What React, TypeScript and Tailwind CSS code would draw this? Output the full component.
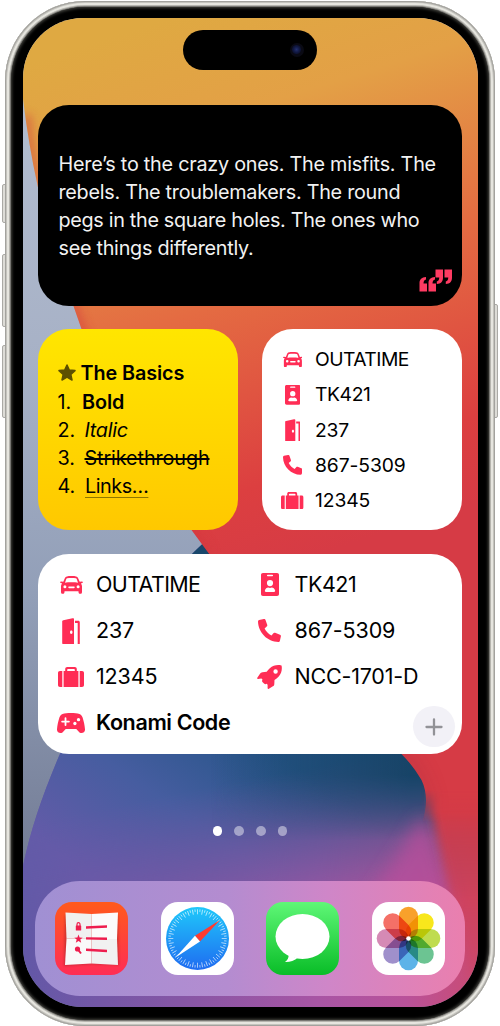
import type { ReactNode } from 'react';

type IconProps = { s?: number };

function Glyph({ w, h, s = 1, children }: { w: number; h: number; s?: number; children: ReactNode }) {
  return (
    <svg width={w * s} height={h * s} viewBox={`0 0 ${w} ${h}`} fill="#ff2d55" className="block shrink-0">
      {children}
    </svg>
  );
}

const Car = ({ s }: IconProps) => (
  <Glyph w={23} h={18} s={s}>
    <path
      fillRule="evenodd"
      d="M7 .4C8.500 0 14.500 0 16 .4 17.300.700 18 1.600 18.400 2.700L19.700 5.800 22 5.500C23 5.500 23.200 6.900 22.200 7.100L20.900 7.400C21.700 8.300 22 9.200 22 10.500V16C22 17.300 21.400 17.800 20.300 17.800 19.200 17.800 18.500 17.300 18.500 16V15.300H4.500V16C4.500 17.300 3.800 17.800 2.700 17.800 1.600 17.800 1 17.300 1 16V10.500C1 9.200 1.300 8.300 2.100 7.400L.8 7.100C-.2 6.900 0 5.500 1 5.500L3.300 5.800 4.600 2.700C5 1.600 5.700.700 7 .4ZM7.200 2.300C6.700 2.400 6.400 2.800 6.200 3.300L5 6.700C8 6.200 15 6.200 18 6.700L16.800 3.300C16.600 2.800 16.300 2.400 15.800 2.300 13.500 2 9.500 2 7.200 2.300ZM4.900 9.300A1.500 1.500 0 1 0 4.900 12.300 1.500 1.500 0 0 0 4.900 9.300ZM18.100 9.300A1.500 1.500 0 1 0 18.100 12.300 1.500 1.500 0 0 0 18.100 9.300ZM9 10.500C8 10.500 8 12.200 9 12.200H14C15 12.200 15 10.500 14 10.500Z"
    />
  </Glyph>
);

const Door = ({ s }: IconProps) => (
  <Glyph w={18} h={26} s={s}>
    <path
      fillRule="evenodd"
      d="M1.300 2.300 10.500.2C11.600 0 12 .4 12 1.200V26H1.200C.5 26 .2 25.700.2 25V3.500C.2 2.800.5 2.500 1.300 2.300ZM9.300 12.500C8.500 12.500 8 13.200 8 14.200S8.500 15.900 9.300 15.900 10.500 15.200 10.500 14.200 10.100 12.500 9.300 12.500Z"
    />
    <path d="M13 2.800H16.200C17.200 2.800 17.800 3.400 17.800 4.400V26H15.700V5.100H13Z" />
  </Glyph>
);

const Suitcase = ({ s }: IconProps) => (
  <Glyph w={26} h={20} s={s}>
    <path d="M2 4H4.300V20H2C.7 20 0 19.300 0 18V6C0 4.700.7 4 2 4ZM21.700 4H24C25.300 4 26 4.700 26 6V18C26 19.300 25.300 20 24 20H21.700Z" />
    <path
      fillRule="evenodd"
      d="M5.600 4H7.200V2C7.200.7 8 0 9.300 0H16.700C18 0 18.800.7 18.800 2V4H20.400V20H5.600ZM9.200 4H16.800V2.700C16.800 2.200 16.500 1.900 16 1.900H10C9.500 1.900 9.200 2.200 9.200 2.700Z"
    />
  </Glyph>
);

const Badge = ({ s }: IconProps) => (
  <Glyph w={18} h={23} s={s}>
    <path
      fillRule="evenodd"
      d="M2 0H16C17.300 0 18 .7 18 2V21C18 22.300 17.300 23 16 23H2C.7 23 0 22.300 0 21V2C0 .7.7 0 2 0ZM6.700 1.800C5.700 1.800 5.700 3.200 6.700 3.200H11.300C12.300 3.200 12.300 1.800 11.300 1.800ZM9 7A3.100 3.100 0 1 0 9 13.200 3.100 3.100 0 0 0 9 7ZM5 18.900H13C14 18.900 14.300 18.400 14.100 17.600 13.600 15.600 12.200 14.600 10.800 14.500 9.700 15.100 8.300 15.100 7.200 14.500 5.800 14.600 4.400 15.600 3.900 17.600 3.700 18.400 4 18.900 5 18.900Z"
    />
  </Glyph>
);

const Phone = ({ s }: IconProps) => (
  <Glyph w={23} h={23} s={s}>
    <path d="M1.100 1 5.900 0C6.700-.1 7.200.2 7.500.9L9.200 5.800C9.400 6.500 9.300 7 8.700 7.500L6.600 9.400C8.200 12.500 10.400 14.800 13.500 16.400L15.400 14.200C15.900 13.600 16.400 13.500 17.100 13.800L22 15.700C22.700 16 23 16.500 22.900 17.200L21.900 21.800C21.700 22.600 21.200 23 20.400 23 9.500 22.800.2 13.500 0 2.500 0 1.700.4 1.200 1.100 1Z" />
  </Glyph>
);

const Rocket = ({ s }: IconProps) => (
  <Glyph w={25} h={24} s={s}>
    <path
      fillRule="evenodd"
      d="M24.300.4C20.500-.3 16 .2 12.800 3.200 11.600 4.300 10.500 5.600 9.700 6.800L5.500 7.200C4.300 7.300 3.600 7.800 3 8.800L.3 12.800C-.1 13.500.3 14 1.100 13.900L4.400 13.600 5.500 14.600C4.900 15.600 4.900 16.400 5.700 17.200L7 18.500C7.900 19.300 8.700 19.300 9.700 18.700L10.600 19.700V23C10.600 23.900 11.200 24.200 11.900 23.800L15.900 21.300C16.800 20.700 17.300 20 17.300 18.900L17.500 14.900C19 14 20.300 12.900 21.500 11.700 24.500 8.600 25.300 4.400 24.600.8 24.600.6 24.500.4 24.300.4ZM18.600 4.300A2.200 2.200 0 1 0 18.600 8.700 2.200 2.200 0 0 0 18.600 4.300Z"
    />
  </Glyph>
);

const Gamepad = ({ s }: IconProps) => (
  <Glyph w={28} h={20} s={s}>
    <path d="M7.300.4C11-.2 17-.2 20.700.4 23.300.8 24.800 2 25.600 4.500 26.800 8.300 27.700 12.300 28 16.300 28.200 18.700 26.500 20 24.500 20 23.300 20 22.500 19.500 21.600 18.500L19.300 15.900H8.700L6.400 18.500C5.500 19.500 4.700 20 3.500 20 1.500 20-.2 18.700 0 16.300.3 12.300 1.200 8.300 2.400 4.500 3.200 2 4.700.8 7.300.4Z" />
    <path d="M8.500 5.200V12M5.100 8.600H11.900" stroke="white" strokeWidth="1.800" strokeLinecap="round" fill="none" />
    <circle cx="21.500" cy="6.700" r="1.650" fill="white" />
    <circle cx="17.900" cy="10.500" r="1.650" fill="white" />
  </Glyph>
);

function Wallpaper() {
  return (
    <svg className="absolute inset-0" width="455" height="989" viewBox="22.500 18 455 989">
      <defs>
        <linearGradient id="slate" x1="0" y1="95" x2="0" y2="860" gradientUnits="userSpaceOnUse">
          <stop offset="0" stopColor="#b2bdd0" />
          <stop offset=".35" stopColor="#a7b1c6" />
          <stop offset=".65" stopColor="#929fb8" />
          <stop offset="1" stopColor="#747d96" />
        </linearGradient>
        <linearGradient id="warm" x1="130" y1="30" x2="300" y2="560" gradientUnits="userSpaceOnUse">
          <stop offset="0" stopColor="#dfa942" />
          <stop offset=".2" stopColor="#e3a046" />
          <stop offset=".52" stopColor="#e46b42" />
          <stop offset=".85" stopColor="#dc3f40" />
          <stop offset="1" stopColor="#d63b45" />
        </linearGradient>
        <linearGradient id="deep" x1="110" y1="890" x2="230" y2="720" gradientUnits="userSpaceOnUse">
          <stop offset="0" stopColor="#635ba8" />
          <stop offset=".5" stopColor="#465da0" />
          <stop offset="1" stopColor="#265588" />
        </linearGradient>
        <linearGradient id="navy" x1="210" y1="0" x2="410" y2="0" gradientUnits="userSpaceOnUse">
          <stop offset="0" stopColor="#174467" stopOpacity="0" />
          <stop offset="1" stopColor="#174467" />
        </linearGradient>
        <linearGradient id="floor" x1="22" y1="0" x2="478" y2="0" gradientUnits="userSpaceOnUse">
          <stop offset="0" stopColor="#6358a7" />
          <stop offset=".35" stopColor="#8656a5" />
          <stop offset=".65" stopColor="#a855a4" />
          <stop offset=".84" stopColor="#b9529a" />
          <stop offset="1" stopColor="#cb4b72" />
        </linearGradient>
        <linearGradient id="fadeB" x1="220" y1="785" x2="250" y2="940" gradientUnits="userSpaceOnUse">
          <stop offset="0" stopColor="white" />
          <stop offset="1" stopColor="black" />
        </linearGradient>
        <linearGradient id="fadeN" x1="0" y1="775" x2="0" y2="840" gradientUnits="userSpaceOnUse">
          <stop offset="0" stopColor="white" />
          <stop offset="1" stopColor="black" />
        </linearGradient>
        <linearGradient id="fadeR" x1="0" y1="810" x2="0" y2="1000" gradientUnits="userSpaceOnUse">
          <stop offset="0" stopColor="white" />
          <stop offset="1" stopColor="black" />
        </linearGradient>
        <linearGradient id="fadeW" x1="0" y1="790" x2="0" y2="822" gradientUnits="userSpaceOnUse">
          <stop offset="0" stopColor="white" />
          <stop offset="1" stopColor="black" />
        </linearGradient>
        <mask id="mB" maskUnits="userSpaceOnUse" x="0" y="0" width="500" height="1026">
          <rect width="500" height="1026" fill="url(#fadeB)" />
        </mask>
        <mask id="mN" maskUnits="userSpaceOnUse" x="0" y="0" width="500" height="1026">
          <rect width="500" height="1026" fill="url(#fadeN)" />
        </mask>
        <mask id="mR" maskUnits="userSpaceOnUse" x="0" y="0" width="600" height="1026">
          <rect width="600" height="1026" fill="url(#fadeR)" />
        </mask>
        <mask id="mW" maskUnits="userSpaceOnUse" x="0" y="0" width="500" height="1026">
          <rect width="500" height="1026" fill="url(#fadeW)" />
        </mask>
        <filter id="soft" filterUnits="userSpaceOnUse" x="0" y="0" width="600" height="1100">
          <feGaussianBlur stdDeviation="9" />
        </filter>
        <filter id="edge" filterUnits="userSpaceOnUse" x="0" y="0" width="600" height="1100">
          <feGaussianBlur stdDeviation="5" />
        </filter>
        <clipPath id="warmClip">
          <path d="M22 0H480V824H421C427 808 427 792 421 780 415 770 409 762 401 754L208 553Q130 450 81 329L73 306Q45 230 37 185 28 145 22 95Z" />
        </clipPath>
        <clipPath id="hill">
          <path d="M22 868C30 830 42 795 59 755L130 620Q178 566 202 544L480 544V1010H22Z" />
        </clipPath>
      </defs>
      <rect x="22" y="18" width="456" height="990" fill="url(#slate)" />
      <g clipPath="url(#hill)">
        <rect x="22" y="500" width="456" height="510" fill="url(#floor)" />
        <rect x="22" y="500" width="456" height="510" fill="url(#deep)" mask="url(#mB)" />
        <path d="M210 500H440V850H210Z" fill="url(#navy)" mask="url(#mN)" />
        <path d="M180 530H240V570H180Z" fill="#19476b" />
        <path d="M422 815Q402 850 365 905H450Q440 850 422 815Z" fill="#b6509c" filter="url(#soft)" opacity=".8" />
        <g mask="url(#mR)">
          <path d="M424 740 432 780 431 812 442 860 474 1000H600V740Z" fill="#d43b47" filter="url(#edge)" />
        </g>
      </g>
      <g mask="url(#mW)">
        <g clipPath="url(#warmClip)">
          <rect x="22" y="18" width="456" height="810" fill="url(#warm)" />
          <path d="M26 115Q28 145 37 185 45 230 73 306L81 329Q130 450 208 553" fill="none" stroke="#d2353c" strokeWidth="9" opacity=".5" filter="url(#edge)" />
          <path d="M395 748Q425 775 427 812" fill="none" stroke="#9d2d43" strokeWidth="9" opacity=".35" filter="url(#soft)" />
        </g>
      </g>
    </svg>
  );
}

function QuoteMarks() {
  return (
    <svg width="34" height="23" viewBox="0 0 34 23" fill="#ff3b62" className="block">
      <path d="M.5 22.500V14C.5 10.500 2.500 8.200 7 7.900V10.500C5.300 10.900 4.600 12 4.500 14.500H8V22.500ZM9.500 22.500V14C9.500 10.500 11.500 8.200 16 7.900V10.500C14.300 10.900 13.600 12 13.500 14.500H17V22.500Z" />
      <path d="M16.500.5H24V8.500C24 12.500 22 14.800 17.800 15V12.400C19.400 12 20.200 11 20.300 8.500H16.500ZM25.500.5H33V8.500C33 12.500 31 14.800 26.800 15V12.400C28.400 12 29.200 11 29.300 8.500H25.500Z" />
    </svg>
  );
}

function ListApp() {
  return (
    <svg width="73" height="73" viewBox="0 0 73 73" className="block">
      <defs>
        <linearGradient id="la" x1="0" y1="0" x2="0" y2="1">
          <stop offset="0" stopColor="#ff5a1c" />
          <stop offset="1" stopColor="#ff2d55" />
        </linearGradient>
        <filter id="ls" x="-20%" y="-20%" width="140%" height="140%">
          <feGaussianBlur stdDeviation="1.300" />
        </filter>
      </defs>
      <rect width="73" height="73" rx="17" fill="url(#la)" />
      <path d="M10 13 37 14 63 13 64 63 37 62 9 64Z" fill="#821c20" opacity=".4" filter="url(#ls)" />
      <path d="M10.500 10.500 36.500 12V37L11.500 36.500Z" fill="#f0f0f0" />
      <path d="M36.500 12 63 10.500 62 37 36.500 37Z" fill="#fbfbfb" />
      <path d="M11.500 36.500 36.500 37V61.500L10 63Z" fill="#f9f9f9" />
      <path d="M36.500 37H62L63 63 36.500 61.500Z" fill="#f1f1f1" />
      <g fill="#ee1d4e" stroke="none">
        <rect x="20.800" y="23.500" width="5.400" height="5" rx=".6" />
        <path d="M22 24V22.500A1.500 1.800 0 0 1 25 22.500V24" fill="none" stroke="#ee1d4e" strokeWidth="1.200" />
        <path d="M23.500 32.500 24.600 35.500 27.700 35.700 25.300 37.500 26.200 40.700 23.500 38.900 20.800 40.700 21.700 37.500 19.300 35.700 22.400 35.500Z" />
        <circle cx="22.500" cy="47" r="2.600" />
        <path d="M31 24.300 52 23.300V25.800L31 26.800ZM31 35.200 52 35.600V38L31 37.600ZM31 46.500 52 47.800V50.300L31 49Z" />
        <path d="M23 47.500 26 51.500" stroke="#ee1d4e" strokeWidth="2" />
      </g>
    </svg>
  );
}

function Safari() {
  const ticks = Array.from({ length: 72 }, (_, i) => i * 5);
  return (
    <svg width="73" height="73" viewBox="0 0 73 73" className="block">
      <defs>
        <linearGradient id="sf" x1="0" y1="0" x2="0" y2="1">
          <stop offset="0" stopColor="#1fc8fa" />
          <stop offset="1" stopColor="#1f6cf1" />
        </linearGradient>
      </defs>
      <rect width="73" height="73" rx="17" fill="white" />
      <circle cx="36.500" cy="36.500" r="31.500" fill="url(#sf)" />
      {ticks.map((a) => (
        <path
          key={a}
          d={a % 10 ? 'M36.500 7.300V9.800' : 'M36.500 7.300V12.300'}
          transform={`rotate(${a} 36.500 36.500)`}
          stroke="white"
          strokeWidth=".7"
          opacity=".85"
        />
      ))}
      <path d="M59 18 39 39.500 34 33.800Z" fill="#ff3b30" />
      <path d="M14.500 55.500 34 33.800 39 39.500Z" fill="white" />
    </svg>
  );
}

function Messages() {
  return (
    <svg width="73" height="73" viewBox="0 0 73 73" className="block">
      <defs>
        <linearGradient id="ms" x1="0" y1="0" x2="0" y2="1">
          <stop offset="0" stopColor="#5ff777" />
          <stop offset="1" stopColor="#09bd27" />
        </linearGradient>
      </defs>
      <rect width="73" height="73" rx="17" fill="url(#ms)" />
      <ellipse cx="36.500" cy="34.500" rx="27" ry="22.500" fill="white" />
      <path d="M22.500 52.500C23 56 21.500 58 19 60 23.500 60.300 28.500 58.500 31 56.500Z" fill="white" />
    </svg>
  );
}

function Photos() {
  const petals = ['#f8a12b', '#f8e71c', '#bfdc4f', '#6cc492', '#5db3e8', '#9f90cb', '#d58ab5', '#f47067'];
  return (
    <svg width="73" height="73" viewBox="0 0 73 73" className="block isolate">
      <rect width="73" height="73" rx="17" fill="white" />
      {petals.map((c, i) => (
        <rect
          key={c}
          x="27"
          y="4.700"
          width="19"
          height="31.800"
          rx="9.500"
          fill={c}
          className="mix-blend-multiply"
          transform={`rotate(${i * 45} 36.500 36.500)`}
        />
      ))}
      <circle cx="36.500" cy="36.500" r="2.300" fill="white" />
    </svg>
  );
}

const smallRows = [
  { icon: <Car s={0.86} />, text: 'OUTATIME', tracking: 'tracking-[-0.550px]' },
  { icon: <Badge s={0.86} />, text: 'TK421', tracking: 'tracking-[-0.4px]' },
  { icon: <Door s={0.86} />, text: '237', tracking: 'tracking-[-0.150px]' },
  { icon: <Phone s={0.86} />, text: '867-5309', tracking: 'tracking-[-0.1px]' },
  { icon: <Suitcase s={0.86} />, text: '12345', tracking: 'tracking-[-0.1px]' },
];

const largeRows = [
  { icon: <Car />, text: 'OUTATIME', tracking: 'tracking-[-0.650px]' },
  { icon: <Badge />, text: 'TK421', tracking: 'tracking-[-0.450px]' },
  { icon: <Door />, text: '237', tracking: 'tracking-[-0.2px]' },
  { icon: <Phone />, text: '867-5309', tracking: 'tracking-[-0.150px]' },
  { icon: <Suitcase />, text: '12345', tracking: 'tracking-[-0.150px]' },
  { icon: <Rocket />, text: 'NCC-1701-D', tracking: 'tracking-[-0.2px]' },
];

const quote = [
  { text: 'Here’s to the crazy ones. The misfits. The', tracking: 'tracking-[-0.240px]' },
  { text: 'rebels. The troublemakers. The round', tracking: 'tracking-[-0.270px]' },
  { text: 'pegs in the square holes. The ones who', tracking: 'tracking-[-0.310px]' },
  { text: 'see things differently.', tracking: 'tracking-[-0.270px]' },
];

export default function App() {
  return (
    <div className="relative h-[1026px] w-[500px] overflow-hidden bg-white pl-[5px] pt-px font-['Inter',sans-serif] text-black">
      <div className="absolute left-[2px] top-[184px] h-[39px] w-[4px] rounded-l-[2px] border border-[#aaa9a5] bg-[#dddcd7]" />
      <div className="absolute left-[2px] top-[254px] h-[73px] w-[4px] rounded-l-[2px] border border-[#aaa9a5] bg-[#dddcd7]" />
      <div className="absolute left-[2px] top-[345px] h-[73px] w-[4px] rounded-l-[2px] border border-[#aaa9a5] bg-[#dddcd7]" />
      <div className="absolute left-[494px] top-[304px] h-[114px] w-[4px] rounded-r-[2px] border border-[#aaa9a5] bg-[#dddcd7]" />

      <div className="relative h-[1025px] w-[490px] rounded-[80px] bg-[#deddd6] p-[6px] shadow-[inset_0_0_0_1px_#a3a29e,inset_0_0_0_2px_#c4c3bd,inset_0_0_0_4px_#e6e5df,inset_0_0_0_5px_#b5b4ae,inset_0_0_0_7px_#777672]">
        <div className="h-full w-full rounded-[74px] bg-black pl-[11.5px] pt-[11px] shadow-[inset_0_0_3px_1px_#44443f]">
          <div className="relative isolate flex h-[989px] w-[455px] flex-col overflow-hidden rounded-[60px]">
            <Wallpaper />

            <div className="relative mx-auto mt-[12px] flex h-[39.5px] w-[133.5px] shrink-0 items-center justify-end rounded-full bg-black pr-[13px]">
              <div className="flex h-[14px] w-[14px] items-center justify-center rounded-full bg-[#0a0a14]">
                <div className="h-[9px] w-[9px] rounded-full bg-[radial-gradient(circle,#23306f_0%,#10173f_50%,#080a1c_100%)]" />
              </div>
            </div>

            <div className="relative ml-[15.5px] mt-[35.500px] flex h-[200.5px] w-[423.500px] shrink-0 flex-col rounded-[31px] bg-black pl-[20.5px] pt-[44.5px]">
              <div className="text-[19.8px] leading-[28px] text-[#f2f2f2]">
                {quote.map((line) => (
                  <p key={line.text} className={`whitespace-nowrap ${line.tracking}`}>
                    {line.text}
                  </p>
                ))}
              </div>
              <div className="mr-[9px] mt-[7px] self-end">
                <QuoteMarks />
              </div>
            </div>

            <div className="relative ml-[15.5px] mt-[23.500px] flex h-[200.5px] w-[423.5px] shrink-0 justify-between">
              <div className="flex w-[200px] flex-col rounded-[31px] bg-gradient-to-b from-[#ffe600] to-[#ffc800] pl-[19.5px] pt-[29px] text-[19.8px] leading-[28px] tracking-[-0.1px]">
                <div className="flex h-[30px] items-center gap-[5px] font-semibold">
                  <svg width="18" height="17" viewBox="0 0 18 17" fill="#5d5000" className="-mt-[2px]">
                    <path
                      d="M9 1 11.300 6 17 6.600 12.800 10.500 14 16 9 13.200 4 16 5.200 10.500 1 6.600 6.700 6Z"
                      stroke="#5d5000"
                      strokeWidth="1.500"
                      strokeLinejoin="round"
                    />
                  </svg>
                  <span>The Basics</span>
                </div>
                <div className="flex">
                  <span className="w-[24.500px]">1.</span>
                  <span className="font-semibold">Bold</span>
                </div>
                <div className="flex">
                  <span className="w-[27px]">2.</span>
                  <span className="italic tracking-[-0.3px]">Italic</span>
                </div>
                <div className="flex">
                  <span className="w-[27px]">3.</span>
                  <span className="line-through decoration-[1.500px]">Strikethrough</span>
                </div>
                <div className="flex">
                  <span className="w-[27.500px]">4.</span>
                  <span className="tracking-[-0.450px] underline decoration-[#8f7700] decoration-1 underline-offset-[4px]">Links…</span>
                </div>
              </div>
              <div className="flex w-[200px] flex-col rounded-[31px] bg-white pl-[18.500px] pt-[13px] text-[19.300px]">
                {smallRows.map((r) => (
                  <div key={r.text} className="flex h-[35.200px] items-center">
                    <span className="mr-[10px] flex w-[25px] justify-center">{r.icon}</span>
                    <span className={r.tracking}>{r.text}</span>
                  </div>
                ))}
              </div>
            </div>

            <div className="relative ml-[15.5px] mt-[24px] h-[200.5px] w-[423.5px] shrink-0 rounded-[31px] bg-white pl-[18px] pt-[8px] text-[21.500px]">
              <div className="grid grid-cols-[198.500px_1fr]">
                {largeRows.map((r) => (
                  <div key={r.text} className="flex h-[46px] items-center">
                    <span className="mr-[10px] flex w-[30px] justify-center">{r.icon}</span>
                    <span className={r.tracking}>{r.text}</span>
                  </div>
                ))}
                <div className="flex h-[46px] items-center">
                  <span className="mr-[10px] flex w-[30px] justify-center">
                    <Gamepad />
                  </span>
                  <span className="whitespace-nowrap font-semibold tracking-[-0.370px]">Konami Code</span>
                </div>
              </div>
              <div className="absolute bottom-[7px] right-[7px] flex h-[41px] w-[42px] items-center justify-center rounded-full bg-[#f2f1f7]">
                <svg width="18" height="18" viewBox="0 0 18 18" stroke="#929297" strokeWidth="2.300" strokeLinecap="round">
                  <path d="M9 1.500V16.500M1.500 9H16.500" />
                </svg>
              </div>
            </div>

            <div className="relative mt-[72px] flex justify-center gap-[12.100px]">
              <div className="h-[9.500px] w-[9.500px] rounded-full bg-white" />
              <div className="h-[9.500px] w-[9.500px] rounded-full bg-white/45" />
              <div className="h-[9.500px] w-[9.500px] rounded-full bg-white/45" />
              <div className="h-[9.500px] w-[9.500px] rounded-full bg-white/45" />
            </div>

            <div className="relative ml-[12px] mt-[45.500px] flex h-[115px] w-[430.500px] shrink-0 items-center justify-between rounded-[45px] bg-[linear-gradient(90deg,#a090d3_0%,#b48cd0_45%,#cf86c8_68%,#ea7fae_100%)] pl-[20.500px] pr-[20px]">
              <ListApp />
              <Safari />
              <Messages />
              <Photos />
            </div>
          </div>
        </div>
      </div>
    </div>
  );
}
